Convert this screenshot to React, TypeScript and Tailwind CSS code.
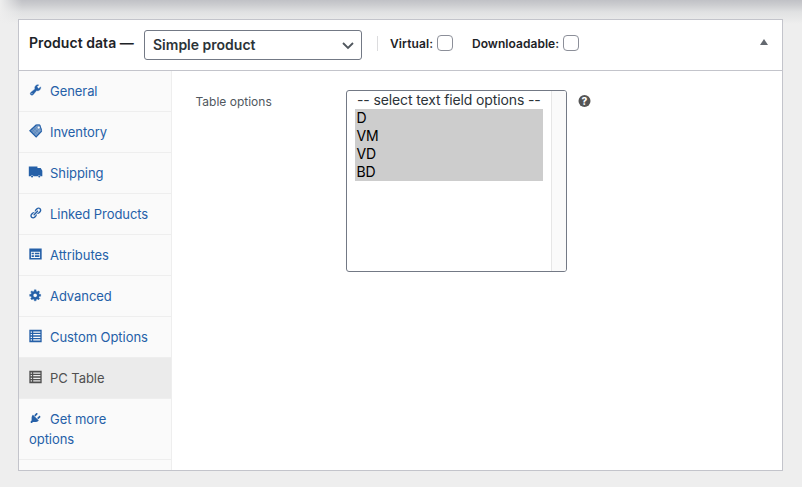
import React from "react";

type IconProps = { children: React.ReactNode };

function Icon({ children }: IconProps) {
  return (
    <svg viewBox="0 0 20 20" fill="currentColor" className="mr-2 h-[13px] w-[13px] shrink-0 -translate-y-[1.5px] overflow-visible">
      {children}
    </svg>
  );
}

const Wrench = () => (
  <Icon>
    <path d="M16.68 9.77c-1.34 1.34-3.3 1.67-4.95.99l-5.41 6.52c-.99.99-2.59.99-3.58 0s-.99-2.59 0-3.57l6.52-5.42c-.68-1.65-.35-3.61.99-4.95 1.28-1.28 3.12-1.62 4.72-1.06l-2.89 2.89 2.82 2.82 2.86-2.87c.53 1.58.18 3.39-1.08 4.65zM3.81 16.21c.4.39 1.04.39 1.43 0 .4-.4.4-1.04 0-1.43-.39-.4-1.03-.4-1.43 0-.39.39-.39 1.03 0 1.43z" stroke="currentColor" strokeWidth=".6" />
  </Icon>
);

const Tag = () => (
  <Icon>
    <path d="M11.500 0h5.500l3 8L11 19.500 1 9.500z" fillOpacity=".6" />
    <path d="M4 7l8.500 8.500M6.500 4.500l8.500 8.500M4 12l8.500-8.500M7 15l9-9" stroke="currentColor" strokeWidth=".8" strokeOpacity=".6" />
    <path d="M11.500 .5L1.500 9.500 11 19l8.500-9" fill="none" stroke="currentColor" strokeWidth="2" />
    <path d="M11.500 .7h5l3 9" fill="none" stroke="currentColor" strokeWidth="1.500" />
    <circle cx="15" cy="4.800" r="1.600" fill="#fafafa" />
  </Icon>
);

const Truck = () => (
  <Icon>
    <path d="M-.3 1.500h13.300v2.500H18L20.500 8v8.500h-2.500a2.500 2.500 0 0 0-4.500 0H7a2.500 2.500 0 0 0-4.500 0H-.3z" />
    <circle cx="4.700" cy="17" r="1.600" />
    <circle cx="15.800" cy="17" r="1.600" />
  </Icon>
);

const Link = () => (
  <Icon>
    <path d="M17.74 2.76c1.68 1.69 1.68 4.41 0 6.1l-1.53 1.52c-1.12 1.12-2.7 1.47-4.14 1.09l2.62-2.61.76-.77.76-.76c.84-.84.84-2.2 0-3.04-.84-.85-2.2-.85-3.04 0l-.77.76-3.38 3.38c-.37-1.44-.02-3.02 1.1-4.14l1.52-1.53c1.69-1.68 4.42-1.68 6.1 0zM8.59 13.43l5.34-5.34c.42-.42.42-1.1 0-1.52-.44-.43-1.13-.39-1.53 0l-5.33 5.34c-.42.42-.42 1.1 0 1.52.44.43 1.13.39 1.52 0zm-.76 2.29l4.14-4.15c.38 1.44.03 3.02-1.09 4.14l-1.52 1.53c-1.69 1.68-4.41 1.68-6.1 0-1.68-1.68-1.68-4.42 0-6.1l1.53-1.52c1.12-1.12 2.7-1.47 4.14-1.1l-4.14 4.15c-.85.84-.85 2.2 0 3.05.84.84 2.2.84 3.04 0z" />
  </Icon>
);

const Form = () => (
  <Icon>
    <path fillRule="evenodd" d="M.5 1.500h19v17H.5zM3 6.500v9.500h14V6.500zM4 8h3.500v2.500H4zM9 8h7v2.500H9zM4 12h3.500v2.500H4zM9 12h7v2.500H9z" />
  </Icon>
);

const Gear = () => (
  <Icon>
    <path d="M18 12h-2.18c-.17.7-.44 1.35-.81 1.93l1.54 1.54-2.1 2.1-1.54-1.54c-.58.36-1.23.63-1.91.79V19H8v-2.18c-.68-.16-1.33-.43-1.91-.79l-1.54 1.54-2.12-2.12 1.54-1.54c-.36-.58-.63-1.23-.79-1.91H1V9.03h2.17c.16-.7.44-1.35.8-1.94L2.43 5.55l2.1-2.1 1.54 1.54c.58-.37 1.24-.64 1.93-.81V2h3v2.18c.68.16 1.33.43 1.91.79l1.54-1.54 2.12 2.12-1.54 1.54c.36.59.64 1.24.8 1.94H18V12zm-8.5 1.5c1.66 0 3-1.34 3-3s-1.34-3-3-3-3 1.34-3 3 1.34 3 3 3z" stroke="currentColor" strokeWidth=".5" />
  </Icon>
);

const Table = () => (
  <Icon>
    <path fillRule="evenodd" d="M.5 .5h19v19H.5zM2.600 3v2h2V3zM6.500 3v2h11V3zM2.600 7v2h2V7zM6.500 7v2h11V7zM2.600 11v2h2V11zM6.500 11v2h11V11zM2.600 15v2h2V15zM6.500 15v2h11V15z" />
  </Icon>
);

const Plug = () => (
  <Icon>
    <path d="M13.11 4.36L9.87 7.6 8 5.73l3.24-3.24c.35-.34 1.05-.2 1.56.32.52.51.66 1.21.31 1.55zm-8 1.77l.91-1.12 9.01 9.01-1.19.84c-.71.71-2.63 1.16-3.82 1.16H6.14L4.9 17.26c-.59.59-1.54.59-2.12 0-.59-.58-.59-1.53 0-2.12l1.24-1.24v-3.88c0-1.13.4-3.19 1.09-3.89zm7.26 3.97l3.24-3.24c.34-.35 1.04-.21 1.55.31.52.51.66 1.21.31 1.55l-3.24 3.25z" />
  </Icon>
);

const tabs = [
  { label: "General", icon: <Wrench /> },
  { label: "Inventory", icon: <Tag /> },
  { label: "Shipping", icon: <Truck /> },
  { label: "Linked Products", icon: <Link /> },
  { label: "Attributes", icon: <Form /> },
  { label: "Advanced", icon: <Gear /> },
  { label: "Custom Options", icon: <Table /> },
  { label: "PC Table", icon: <Table />, active: true },
];

export default function App() {
  return (
    <div className="h-[487px] w-[802px] overflow-hidden bg-[#eeeeee] bg-[linear-gradient(to_right,#eeeeee_0px,#eeeeee00_22px),linear-gradient(to_bottom,#c0c1c6_0px,#cccdd0_5px,#e0e1e2_12px,#eeeeee_24px)] px-[18px] pt-[19px] font-['Inter','Liberation_Sans',sans-serif] text-[13px] text-[#1d2327]">
      <section className="flex h-[452px] w-[765px] flex-col border border-[#c3c4cb] bg-white">
        <header className="flex h-[51px] shrink-0 items-center border-b border-[#c3c4cb] pl-[10px]">
          <h2 className="w-[115px] -translate-y-[3px] whitespace-nowrap text-[14px] font-semibold tracking-[0.06px]">Product data —</h2>
          <button className="flex h-[30px] w-[218px] items-center justify-between rounded-[3px] border border-[#737985] pl-2 pr-[7px] text-[14px] font-semibold text-[#2c3338]">
            <span className="-translate-y-px">Simple product</span>
            <svg viewBox="0 0 12 8" className="h-2 w-3 translate-y-px" fill="none" stroke="#50575e" strokeWidth="1.800">
              <path d="M1 1l5 5 5-5" />
            </svg>
          </button>
          <span className="ml-[15px] h-[15px] w-px -translate-y-[2px] bg-[#dcdcde]" />
          <label className="ml-3 flex -translate-y-[2px] items-center text-[12px] font-semibold">
            <span className="w-[47px] translate-y-px whitespace-nowrap tracking-[0.1px]">Virtual:</span>
            <span className="h-4 w-4 rounded-[4px] border border-[#8c8f99] bg-white" />
          </label>
          <label className="ml-[19px] flex -translate-y-[2px] items-center text-[12px] font-semibold">
            <span className="w-[91px] translate-y-px whitespace-nowrap tracking-[0.04px]">Downloadable:</span>
            <span className="h-4 w-4 rounded-[4px] border border-[#8c8f99] bg-white" />
          </label>
          <svg viewBox="0 0 8 6" className="ml-auto mr-[14px] h-[6px] w-2 -translate-y-[3px]" fill="#646970">
            <path d="M4 0l4 6H0z" />
          </svg>
        </header>
        <div className="flex min-h-0 flex-1">
          <nav className="w-[153px] shrink-0 border-r border-[#eeeeee] bg-[#fafafa] leading-5 tracking-[-0.06px] text-[#2560a8]">
            {tabs.map((t) => (
              <a
                key={t.label}
                className={
                  "flex h-[41px] items-center whitespace-nowrap border-b border-[#eeeeee] pl-[10px] " +
                  (t.active ? "bg-[#ebebeb] text-[#505050]" : "")
                }
              >
                {t.icon}
                <span>{t.label}</span>
              </a>
            ))}
            <a className="block h-[61px] border-b border-[#eeeeee] pl-[10px] pt-[10px]">
              <span className="flex items-center">
                <Plug />
                Get more
              </span>
              options
            </a>
          </nav>
          <div className="flex items-start pl-6 pt-[19px]">
            <span className="w-[150px] -translate-x-[0.5px] pt-[2px] text-[12px] leading-5 text-[#50575e]">Table options</span>
            <div className="flex h-[182px] w-[221px] overflow-hidden rounded-[3px] border border-[#737985] bg-white text-[14px] leading-[18px] tracking-[-0.13px]">
              <div className="w-[204px] shrink-0 px-2 text-black">
                <div className="whitespace-nowrap pl-[2px] text-[#2c3338]">-- select text field options --</div>
                {["D", "VM", "VD", "BD"].map((o) => (
                  <div key={o} className="h-[18px] bg-[#cdcdcd] pl-[1.500px]">
                    {o}
                  </div>
                ))}
              </div>
              <div className="flex-1 border-l border-[#e6e6e6] bg-[#fafafa]" />
            </div>
            <span className="ml-3 mt-[5px] flex h-3 w-3 -translate-x-[0.5px] items-center justify-center rounded-full bg-[#555555] text-[10px] font-extrabold leading-none text-white">
              ?
            </span>
          </div>
        </div>
      </section>
    </div>
  );
}
